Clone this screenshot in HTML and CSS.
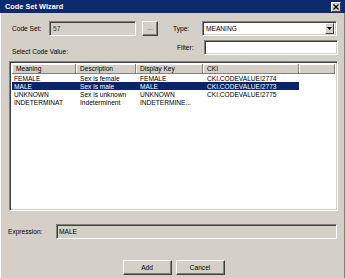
FILE: index.html
```html
<!DOCTYPE html>
<html lang="en">
<head>
    <meta charset="UTF-8">
    <title>Code Set Wizard</title>
    <link rel="stylesheet" href="styles.css">
</head>
<body>
    <div class="window">
        <div class="titlebar">
            <span class="title">Code Set Wizard</span>
            <span class="close">
                <svg width="6" height="6" viewBox="0 0 6 6"><path d="M0.5 0.5 L5.5 5.5 M5.5 0.5 L0.5 5.5" stroke="#000" stroke-width="1.3"/></svg>
            </span>
        </div>

        <div class="content">
            <!-- code set + type -->
            <div class="row row-top">
                <span class="lbl lbl-code">Code Set:</span>
                <div class="field sunken disabled field-code">57</div>
                <div class="btn btn-dots">...</div>
                <span class="lbl lbl-type">Type:</span>
                <div class="field sunken field-select">
                    <span>MEANING</span>
                    <span class="drop">
                        <svg width="5" height="3" viewBox="0 0 5 3"><path d="M0 0 H5 L2.5 3 Z" fill="#000"/></svg>
                    </span>
                </div>
            </div>

            <!-- filter -->
            <div class="row row-filter">
                <span class="lbl lbl-select">Select Code Value:</span>
                <span class="lbl lbl-filter">Filter:</span>
                <div class="field sunken field-filter"></div>
            </div>

            <!-- liste des valeurs -->
            <div class="listview sunken">
                <div class="lv-header">
                    <div class="lv-head">Meaning</div>
                    <div class="lv-head">Description</div>
                    <div class="lv-head">Display Key</div>
                    <div class="lv-head">CKI</div>
                    <div class="lv-head"></div>
                </div>
                <div class="lv-row">
                    <span class="c1">FEMALE</span><span>Sex is female</span><span>FEMALE</span><span>CKI.CODEVALUE!2774</span>
                </div>
                <div class="lv-row selected">
                    <span class="c1">MALE</span><span>Sex is male</span><span>MALE</span><span>CKI.CODEVALUE!2773</span>
                </div>
                <div class="lv-row">
                    <span class="c1">UNKNOWN</span><span>Sex is unknown</span><span>UNKNOWN</span><span>CKI.CODEVALUE!2775</span>
                </div>
                <div class="lv-row">
                    <span class="c1">INDETERMINAT</span><span>Indeterminent</span><span>INDETERMINE...</span><span></span>
                </div>
            </div>

            <!-- expression -->
            <div class="row row-expr">
                <span class="lbl lbl-expr">Expression:</span>
                <div class="field sunken disabled field-expr">MALE</div>
            </div>

            <div class="buttons">
                <div class="btn btn-main">Add</div>
                <div class="btn btn-main">Cancel</div>
            </div>
        </div>
    </div>
</body>
</html>
```

FILE: styles.css
```css
* {
    box-sizing: border-box;
}

body {
    margin: 0;
    padding: 0;
    font-family: "Liberation Sans", Arial, sans-serif;
    font-size: 6.6px;
    color: #000;
    background-color: #d4d0c8;
}

.window {
    width: 345px;
    height: 278px;
    background-color: #d4d0c8;
    border-left: 1px solid #ffffff;
    border-right: 1px solid #808080;
}

.titlebar {
    height: 13px;
    margin-left: -1px;
    margin-right: -1px;
    background-color: #0c2a6c;
    display: flex;
    align-items: center;
    justify-content: space-between;
    padding: 0 4px 0 5px;
}

.title {
    color: #fff;
    font-weight: bold;
    font-size: 7.4px;
}

.close {
    width: 10px;
    height: 10px;
    background-color: #d4d0c8;
    border: 1px solid;
    border-color: #fff #404040 #404040 #fff;
    display: flex;
    align-items: center;
    justify-content: center;
}

.content {
    padding: 0 6px 0 8px;
}

/* bordures façon windows classique */
.sunken {
    border: 1px solid;
    border-color: #808080 #fff #fff #808080;
    box-shadow: inset 1px 1px 0 #404040, inset -1px -1px 0 #d4d0c8;
}

.btn {
    background-color: #d4d0c8;
    border: 1px solid;
    border-color: #fff #404040 #404040 #fff;
    box-shadow: inset -1px -1px 0 #808080;
    display: flex;
    align-items: center;
    justify-content: center;
}

.row {
    display: flex;
    height: 15px;
}

.lbl {
    display: flex;
    align-items: center;
    white-space: nowrap;
}

.field {
    background-color: #fff;
    display: flex;
    align-items: center;
    padding: 0 3px;
}

.field.disabled {
    background-color: #d4d0c8;
}

.row-top {
    margin-top: 8px;
}

.lbl-code {
    margin-left: 3px;
    width: 37px;
}

.field-code {
    width: 87px;
    color: #303030;
}

.btn-dots {
    margin-left: 6px;
    width: 16px;
    color: #505050;
    line-height: 1;
}

.lbl-type {
    margin-left: 15px;
    width: 29px;
}

.field-select {
    width: 135px;
    justify-content: space-between;
    padding-right: 2px;
}

.drop {
    width: 9px;
    height: 11px;
    background-color: #d4d0c8;
    border: 1px solid;
    border-color: #fff #404040 #404040 #fff;
    display: flex;
    align-items: center;
    justify-content: center;
}

.row-filter {
    margin-top: 4px;
}

.lbl-select {
    margin-left: 3px;
    width: 162px;
    align-self: flex-end;
    height: 8px;
}

.lbl-filter {
    margin-left: 3px;
    width: 27px;
}

.field-filter {
    width: 134px;
}

.listview {
    margin-top: 6px;
    height: 150px;
    background-color: #fff;
    padding: 2px 2px;
}

.lv-header {
    display: grid;
    grid-template-columns: 64px 60px 67px 96px 1fr;
    height: 10px;
}

.lv-head {
    background-color: #d4d0c8;
    border-right: 1px solid #808080;
    border-bottom: 1px solid #808080;
    box-shadow: inset 1px 1px 0 #fff;
    padding-left: 4px;
    display: flex;
    align-items: center;
    white-space: nowrap;
}

.lv-row {
    display: grid;
    grid-template-columns: 64px 60px 67px 96px;
    width: 287px;
    height: 8px;
}

.lv-row span {
    padding-left: 4px;
    display: flex;
    align-items: center;
    white-space: nowrap;
    overflow: hidden;
}

.lv-row span.c1 {
    padding-left: 2px;
}

.lv-row.selected {
    background-color: #0a246a;
    color: #fff;
}

.row-expr {
    margin-top: 13px;
    margin-left: -1px;
}

.lbl-expr {
    width: 48px;
}

.field-expr {
    width: 281px;
    padding-left: 2px;
}

.buttons {
    margin-top: 21px;
    display: flex;
    justify-content: center;
    gap: 4px;
    height: 15px;
}

.btn-main {
    width: 49px;
}
```
